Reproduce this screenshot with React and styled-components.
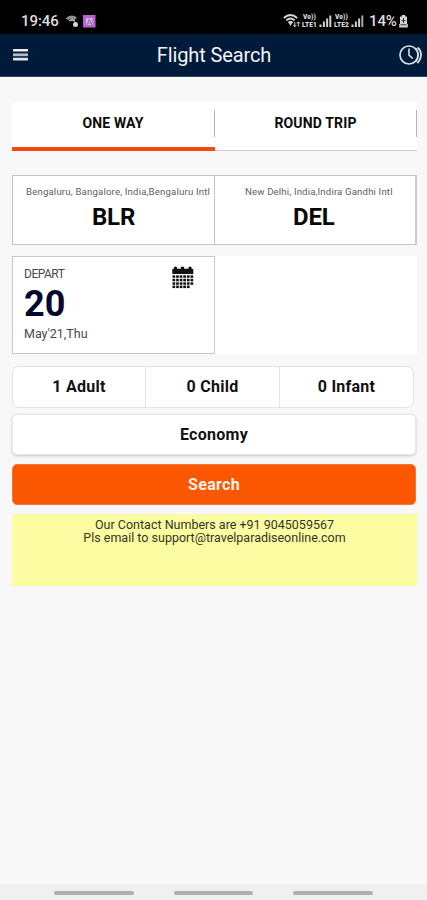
import React, { useState } from "react";
import styled, { createGlobalStyle } from "styled-components";

const GlobalStyle = createGlobalStyle`
  * {
    box-sizing: border-box;
  }
  body {
    margin: 0;
    background: #f8f8f8;
    font-family: Roboto, "Liberation Sans", sans-serif;
  }
  button {
    font-family: inherit;
    border: none;
    padding: 0;
    margin: 0;
    background: none;
    cursor: pointer;
  }
`;

const Screen = styled.div`
  width: 100%;
  min-height: 900px;
  display: flex;
  flex-direction: column;
  background: #f8f8f8;
  color: #0b0b0b;
`;

const StatusBar = styled.div`
  height: 34px;
  padding: 9px 19px 0 21px;
  display: flex;
  justify-content: space-between;
  background: #000000;
  color: #dedede;
  font-size: 15px;
  font-weight: 500;
  line-height: 24px;
`;

const StatusGroup = styled.div`
  display: flex;
  align-items: center;
  height: 24px;
`;

const Clock = styled.span`
  width: 44px;
  letter-spacing: -0.05px;
`;

const Battery = styled.span`
  margin-left: 4px;
  width: 30px;
  letter-spacing: -0.1px;
`;

const Lte = styled.span`
  display: flex;
  flex-direction: column;
  width: 17px;
  font-size: 6.5px;
  font-weight: 900;
  line-height: 8px;
  text-align: center;
  letter-spacing: 0.1px;
`;

const Header = styled.header`
  height: 43px;
  padding: 0 4px 1px 13px;
  display: grid;
  grid-template-columns: 24px 1fr 24px;
  align-items: center;
  background: #001b39;
  color: #f2f4f7;
  border-bottom: 1px solid #33475e;

  svg {
    display: block;
  }
`;

const Title = styled.h1`
  margin: 0;
  padding-right: 8px;
  font-size: 20px;
  font-weight: 400;
  line-height: 24px;
  text-align: center;
  letter-spacing: -0.12px;
`;

const Content = styled.main`
  flex: 1;
  padding: 25px 10px 0 12px;
`;

const Tabs = styled.div`
  height: 49px;
  width: 405px;
  display: grid;
  grid-template-columns: 203px 202px;
  background: #ffffff;
`;

const Tab = styled.button`
  display: flex;
  flex-direction: column;
  color: #0b0b0b;
  font-size: 14px;
  font-weight: 700;
  letter-spacing: 0.15px;
  border-bottom: ${(props) =>
    props.$active ? "4px solid #ef4d10" : "1px solid #d0d0d0"};

  span {
    width: 100%;
    height: 27px;
    margin-top: 8px;
    line-height: 27px;
    border-right: 1px solid #b4b4b4;
  }
`;

const Airports = styled.div`
  width: 405px;
  height: 70px;
  margin-top: 24px;
  display: grid;
  grid-template-columns: 202px 200px;
  background: #ffffff;
  border: 1px solid #c3c3c3;
  border-right: 2px solid #cbcbcb;
`;

const Airport = styled.div`
  min-width: 0;
  padding: 10px 0 0 ${(props) => props.$indent};
  border-right: ${(props) => (props.$divided ? "1px solid #c3c3c3" : "none")};
`;

const AirportName = styled.div`
  height: 12px;
  color: #606060;
  font-size: 9.6px;
  line-height: 12px;
  white-space: nowrap;
  letter-spacing: ${(props) => props.$spacing};
`;

const AirportCode = styled.div`
  margin-left: ${(props) => props.$shift};
  margin-top: 4px;
  color: #080808;
  font-size: 24px;
  font-weight: 700;
  line-height: 30px;
  letter-spacing: -0.2px;
`;

const Dates = styled.div`
  width: 405px;
  height: 98px;
  margin-top: 11px;
  display: flex;
  background: #ffffff;
`;

const DepartCard = styled.div`
  width: 203px;
  padding: 10px 20px 0 11px;
  display: flex;
  justify-content: space-between;
  border: 1px solid #c6c6c6;

  svg {
    display: block;
    margin-top: -1px;
  }
`;

const DateLabel = styled.div`
  height: 14px;
  color: #484848;
  font-size: 12px;
  line-height: 14px;
  letter-spacing: -0.5px;
`;

const Day = styled.div`
  height: 46px;
  color: #02092f;
  font-size: 36px;
  font-weight: 700;
  line-height: 46px;
`;

const MonthLabel = styled.div`
  color: #484848;
  font-size: 12.5px;
  line-height: 14px;
`;

const Passengers = styled.div`
  width: 402px;
  height: 42px;
  margin-top: 12px;
  display: grid;
  grid-template-columns: 132px 134px 134px;
  background: #ffffff;
  border: 1px solid #e3e3e3;
  border-radius: 7px;
`;

const Passenger = styled.button`
  padding-bottom: 2px;
  color: #111111;
  font-size: 16px;
  font-weight: 700;
  letter-spacing: 0.25px;

  & + & {
    border-left: 1px solid #e3e3e3;
  }
`;

const WideButton = styled.button`
  display: block;
  width: 404px;
  height: 41px;
  margin-top: ${(props) => (props.$primary ? "9px" : "6px")};
  padding-bottom: 1px;
  color: ${(props) => (props.$primary ? "#fff3eb" : "#111111")};
  background: ${(props) => (props.$primary ? "#fb5600" : "#ffffff")};
  border: 1px solid ${(props) => (props.$primary ? "#f4763c" : "#e8e8e8")};
  border-radius: 5px;
  box-shadow: ${(props) =>
    props.$primary ? "none" : "0 1px 3px rgba(0, 0, 0, 0.2)"};
  font-size: 16px;
  font-weight: 700;
  letter-spacing: 0.3px;
`;

const Contact = styled.div`
  width: 405px;
  height: 72px;
  margin-top: 9px;
  padding-top: 5px;
  background: #fcfda2;
  color: #35351f;
  font-size: 12.5px;
  line-height: 12.5px;
  text-align: center;
`;

const NavBar = styled.div`
  height: 16px;
  padding: 7px 54px 0;
  display: flex;
  gap: 40px;
  background: #f0f0f0;
`;

const NavPill = styled.div`
  width: 80px;
  height: 4px;
  border-radius: 2px;
  background: #b0b0b0;
`;

const AppBadgeSvg = styled.svg`
  margin-left: 4px;
`;

const CallIcon = () => (
  <svg width="14" height="14" viewBox="0 0 14 14" fill="none">
    <path d="M0.5 4.5Q6 -1 12 3.5L9 6.5Q6 3.5 3 6Z" fill="#8f8f8f" />
    <path d="M4 7Q7 4.5 10 7.5" stroke="#b5b5b5" strokeWidth="1.6" />
    <circle cx="10.5" cy="10.5" r="2.5" fill="#d5d5d5" />
  </svg>
);

const AppBadge = () => (
  <AppBadgeSvg width="13" height="13" viewBox="0 0 13 13">
    <rect width="12.5" height="12.5" fill="#b763d2" />
    <path d="M3 3H9.5V10H3Z" fill="#d9b0e2" />
    <path d="M4 10L6.3 4L9 10M5 8H8" stroke="#9a68ae" fill="none" />
  </AppBadgeSvg>
);

const WifiIcon = () => (
  <svg width="18" height="14" viewBox="0 0 18 14" fill="none">
    <path
      d="M0.8 4Q7.5 -1.8 14.2 4M3.3 6.4Q7.5 2.8 11.7 6.4M5.5 8.8Q7.5 6.8 9.5 8.8"
      stroke="#d4d4d4"
      strokeWidth="1.9"
    />
    <path d="M5.8 9H9.2L7.5 12Z" fill="#d4d4d4" />
    <path
      d="M11.8 8V12.5M10.3 11L11.8 12.8L13.3 11M15.3 12.5V8M13.8 9.5L15.3 7.8L16.8 9.5"
      stroke="#d4d4d4"
    />
  </svg>
);

const SignalIcon = ({ strong }) => (
  <svg width="15" height="14" viewBox="0 0 15 14" fill="#cfcfcf">
    <rect x="1.5" y="10.5" width="2" height="2.5" />
    <rect x="4.9" y="7.5" width="2" height="5.5" />
    <rect x="8.1" y="4.5" width="2" height="8.5" />
    <rect
      x="11.3"
      y="1.5"
      width="2"
      height="11.5"
      fill={strong ? "#cfcfcf" : "#a4a4a4"}
    />
  </svg>
);

const BatteryIcon = () => (
  <svg width="9" height="13" viewBox="0 0 9 13">
    <path d="M2.8 0H6.2V1.5H8V9H8.8V12.5H0.2V9H1V1.5H2.8Z" fill="#d4d4d4" />
    <path d="M4.5 3V8M2.5 5.5H6.5M1.5 9.8H7.5" stroke="#333333" />
  </svg>
);

const MenuIcon = () => (
  <svg width="15" height="12" viewBox="0 0 15 12">
    <rect width="15" height="2.4" rx="0.5" fill="#eeeeee" />
    <rect y="4.4" width="15" height="2.8" fill="#b5bbc3" />
    <rect y="8.8" width="15" height="2.6" rx="0.5" fill="#dfe2e5" />
  </svg>
);

const HistoryIcon = () => (
  <svg width="24" height="22" viewBox="0 0 24 22" fill="none" stroke="#dce0e6">
    <circle cx="10" cy="11" r="9" strokeWidth="1.7" />
    <path d="M10 4.5V11.2L13.7 14.5" strokeWidth="1.6" />
    <path d="M18.5 3.5Q21.8 6 22 10.2Q22 15.5 18.3 19" strokeWidth="1.8" />
    <path d="M17 4Q19.5 7.5 19.5 11Q19.3 15 17 18" strokeWidth="1" />
  </svg>
);

const CALENDAR_ROWS = [10, 13.5, 17, 20.3];

const CalendarIcon = () => (
  <svg width="22" height="23" viewBox="0 0 22 23" fill="#111111">
    <path d="M0.3 8V3.2L2 2.4V1.2Q3.5 -0.2 5 1.2V2.8H8.8V1.2Q10.5 -0.2 12.2 1.2V2.8H16.5V1.2Q18 -0.2 19.5 1.2V2.4L21.3 3.2V8Z" />
    {CALENDAR_ROWS.map((y, row) =>
      [0.5, 4.1, 7.7, 11.3, 14.9, 18.5].map((x, col) =>
        row === 3 && col === 5 ? null : (
          <rect key={`${x}-${y}`} x={x} y={y - 0.7} width="2.7" height="2.5" />
        )
      )
    )}
  </svg>
);

const passengers = ["1 Adult", "0 Child", "0 Infant"];

export default function App() {
  const [trip, setTrip] = useState("oneway");

  return (
    <Screen>
      <GlobalStyle />
      <StatusBar>
        <StatusGroup>
          <Clock>19:46</Clock>
          <CallIcon />
          <AppBadge />
        </StatusGroup>
        <StatusGroup>
          <WifiIcon />
          <Lte>
            <span>Vo))</span>
            <span>LTE1</span>
          </Lte>
          <SignalIcon strong />
          <Lte>
            <span>Vo))</span>
            <span>LTE2</span>
          </Lte>
          <SignalIcon />
          <Battery>14%</Battery>
          <BatteryIcon />
        </StatusGroup>
      </StatusBar>
      <Header>
        <MenuIcon />
        <Title>Flight Search</Title>
        <HistoryIcon />
      </Header>
      <Content>
        <Tabs>
          <Tab $active={trip === "oneway"} onClick={() => setTrip("oneway")}>
            <span>ONE WAY</span>
          </Tab>
          <Tab $active={trip === "round"} onClick={() => setTrip("round")}>
            <span>ROUND TRIP</span>
          </Tab>
        </Tabs>
        <Airports>
          <Airport $divided $indent="13px">
            <AirportName $spacing="0.18px">
              Bengaluru, Bangalore, India,Bengaluru Intl
            </AirportName>
            <AirportCode $shift="66px">BLR</AirportCode>
          </Airport>
          <Airport $indent="30px">
            <AirportName $spacing="0.16px">
              New Delhi, India,Indira Gandhi Intl
            </AirportName>
            <AirportCode $shift="48px">DEL</AirportCode>
          </Airport>
        </Airports>
        <Dates>
          <DepartCard>
            <div>
              <DateLabel>DEPART</DateLabel>
              <Day>20</Day>
              <MonthLabel>May'21,Thu</MonthLabel>
            </div>
            <CalendarIcon />
          </DepartCard>
        </Dates>
        <Passengers>
          {passengers.map((label) => (
            <Passenger key={label}>{label}</Passenger>
          ))}
        </Passengers>
        <WideButton>Economy</WideButton>
        <WideButton $primary>Search</WideButton>
        <Contact>
          Our Contact Numbers are +91 9045059567
          <br />
          Pls email to support@travelparadiseonline.com
        </Contact>
      </Content>
      <NavBar>
        <NavPill />
        <NavPill />
        <NavPill />
      </NavBar>
    </Screen>
  );
}
